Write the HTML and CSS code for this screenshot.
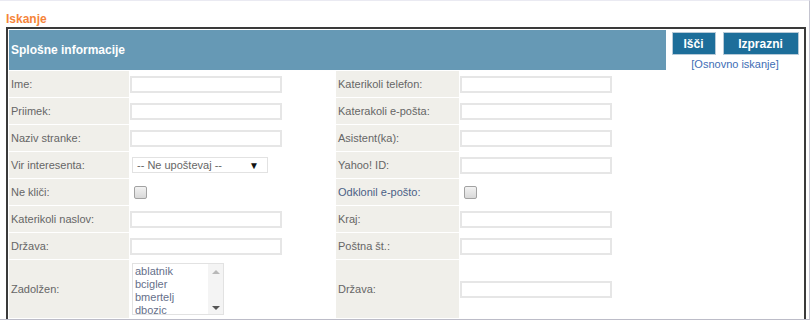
FILE: index.html
```html
<!DOCTYPE html>
<html lang="sl">
<head>
    <meta charset="UTF-8">
    <title>Iskanje</title>
    <link rel="stylesheet" href="styles.css">
</head>
<body>
    <div class="page">
        <h1 class="page-title">Iskanje</h1>
        <div class="search-box">
            <div class="search-head">
                <div class="section-title">Splošne informacije</div>
                <div class="actions">
                    <div class="buttons">
                        <button class="btn btn-search">Išči</button>
                        <button class="btn btn-clear">Izprazni</button>
                    </div>
                    <a href="#" class="basic-link">[Osnovno iskanje]</a>
                </div>
            </div>
            <div class="fields">
                <div class="label">Ime:</div>
                <div class="field"><input type="text" class="text"></div>
                <div class="label">Katerikoli telefon:</div>
                <div class="field"><input type="text" class="text"></div>

                <div class="label">Priimek:</div>
                <div class="field"><input type="text" class="text"></div>
                <div class="label">Katerakoli e-pošta:</div>
                <div class="field"><input type="text" class="text"></div>

                <div class="label">Naziv stranke:</div>
                <div class="field"><input type="text" class="text"></div>
                <div class="label">Asistent(ka):</div>
                <div class="field"><input type="text" class="text"></div>

                <div class="label">Vir interesenta:</div>
                <div class="field">
                    <div class="select"><span>-- Ne upoštevaj --</span><span class="arrow">▼</span></div>
                </div>
                <div class="label">Yahoo! ID:</div>
                <div class="field"><input type="text" class="text"></div>

                <div class="label">Ne kliči:</div>
                <div class="field"><input type="checkbox" class="check"></div>
                <div class="label label-dark">Odklonil e-pošto:</div>
                <div class="field"><input type="checkbox" class="check"></div>

                <div class="label">Katerikoli naslov:</div>
                <div class="field"><input type="text" class="text"></div>
                <div class="label">Kraj:</div>
                <div class="field"><input type="text" class="text"></div>

                <div class="label">Država:</div>
                <div class="field"><input type="text" class="text"></div>
                <div class="label">Poštna št.:</div>
                <div class="field"><input type="text" class="text"></div>

                <div class="label">Zadolžen:</div>
                <div class="field">
                    <div class="listbox">
                        <div class="options">
                            <div>ablatnik</div>
                            <div>bcigler</div>
                            <div>bmertelj</div>
                            <div>dbozic</div>
                        </div>
                        <div class="scroll">
                            <span class="up"></span>
                            <span class="down"></span>
                        </div>
                    </div>
                </div>
                <div class="label">Država:</div>
                <div class="field"><input type="text" class="text"></div>
            </div>
        </div>
    </div>
</body>
</html>
```

FILE: styles.css
```css
body {
    margin: 0;
    font-family: "Liberation Sans", Arial, sans-serif;
    background-color: #fff;
}
.page {
    width: 810px;
    height: 320px;
    box-sizing: border-box;
    border-top: 1px solid #eaeaf2;
    border-right: 1px solid #c4c4d0;
    border-bottom: 1px solid #bcbcc8;
    padding: 11px 0 0 6px;
    overflow: hidden;
}
.page-title {
    margin: 0 0 1px;
    font-size: 12px;
    line-height: 14px;
    font-weight: bold;
    color: #f5843a;
}
.search-box {
    width: 800px;
    box-sizing: border-box;
    border: 2px solid #3a3a3a;
    padding: 1px;
}
.search-head {
    display: flex;
    gap: 1px;
    height: 40px;
    margin-bottom: 1px;
}
.section-title {
    width: 657px;
    background-color: #6699b5;
    color: #fff;
    font-size: 12px;
    font-weight: bold;
    display: flex;
    align-items: center;
    padding-left: 2px;
    box-sizing: border-box;
}
.actions {
    flex: 1;
    display: flex;
    flex-direction: column;
    align-items: center;
    padding-top: 2px;
}
.buttons {
    display: flex;
    gap: 7px;
}
.btn {
    height: 23px;
    padding: 0;
    border: 1px solid #b7cad8;
    background-color: #1d6e9a;
    color: #fff;
    font-family: inherit;
    font-size: 12px;
    font-weight: bold;
    cursor: pointer;
}
.btn-search {
    width: 44px;
}
.btn-clear {
    width: 76px;
}
.basic-link {
    margin-top: 3px;
    font-size: 11px;
    line-height: 13px;
    color: #3e6db5;
    text-decoration: none;
}
.fields {
    display: grid;
    grid-template-columns: 120px 205px 123px 1fr;
    grid-template-rows: repeat(7, 26px) 58px;
    gap: 1px;
}
.label {
    background-color: #f0efea;
    color: #666;
    font-size: 11px;
    display: flex;
    align-items: center;
    padding-left: 2px;
}
.label-dark {
    color: #4b5f86;
}
.field {
    display: flex;
    align-items: center;
}
.text {
    width: 152px;
    height: 17px;
    box-sizing: border-box;
    border: 2px solid #e6e6e6;
    padding: 0 2px;
    margin: 0;
    font-size: 11px;
}
.select {
    width: 136px;
    height: 16px;
    box-sizing: border-box;
    margin-left: 2px;
    border: 1px solid #e2e2e2;
    display: flex;
    align-items: center;
    justify-content: space-between;
    padding: 0 8px 0 4px;
    font-size: 11px;
    color: #666;
}
.arrow {
    color: #111;
    font-size: 10px;
}
.check {
    appearance: none;
    width: 13px;
    height: 13px;
    margin: 0 0 0 4px;
    border: 1px solid #a2a2a2;
    border-radius: 2px;
    background: linear-gradient(#f2f2f2, #d8d8d8);
}
.listbox {
    width: 92px;
    height: 52px;
    box-sizing: border-box;
    margin-left: 2px;
    border: 1px solid #e2e2e2;
    display: flex;
    overflow: hidden;
}
.options {
    flex: 1;
    padding: 1px 0 0 2px;
    font-size: 11px;
    line-height: 13px;
    color: #66708a;
}
.scroll {
    width: 15px;
    display: flex;
    flex-direction: column;
    justify-content: space-between;
    align-items: center;
    padding: 6px 0 4px;
    background-color: #f4f4f4;
}
.up {
    border-left: 4px solid transparent;
    border-right: 4px solid transparent;
    border-bottom: 4px solid #b8b8b8;
}
.down {
    border-left: 4px solid transparent;
    border-right: 4px solid transparent;
    border-top: 4px solid #555;
}
```
